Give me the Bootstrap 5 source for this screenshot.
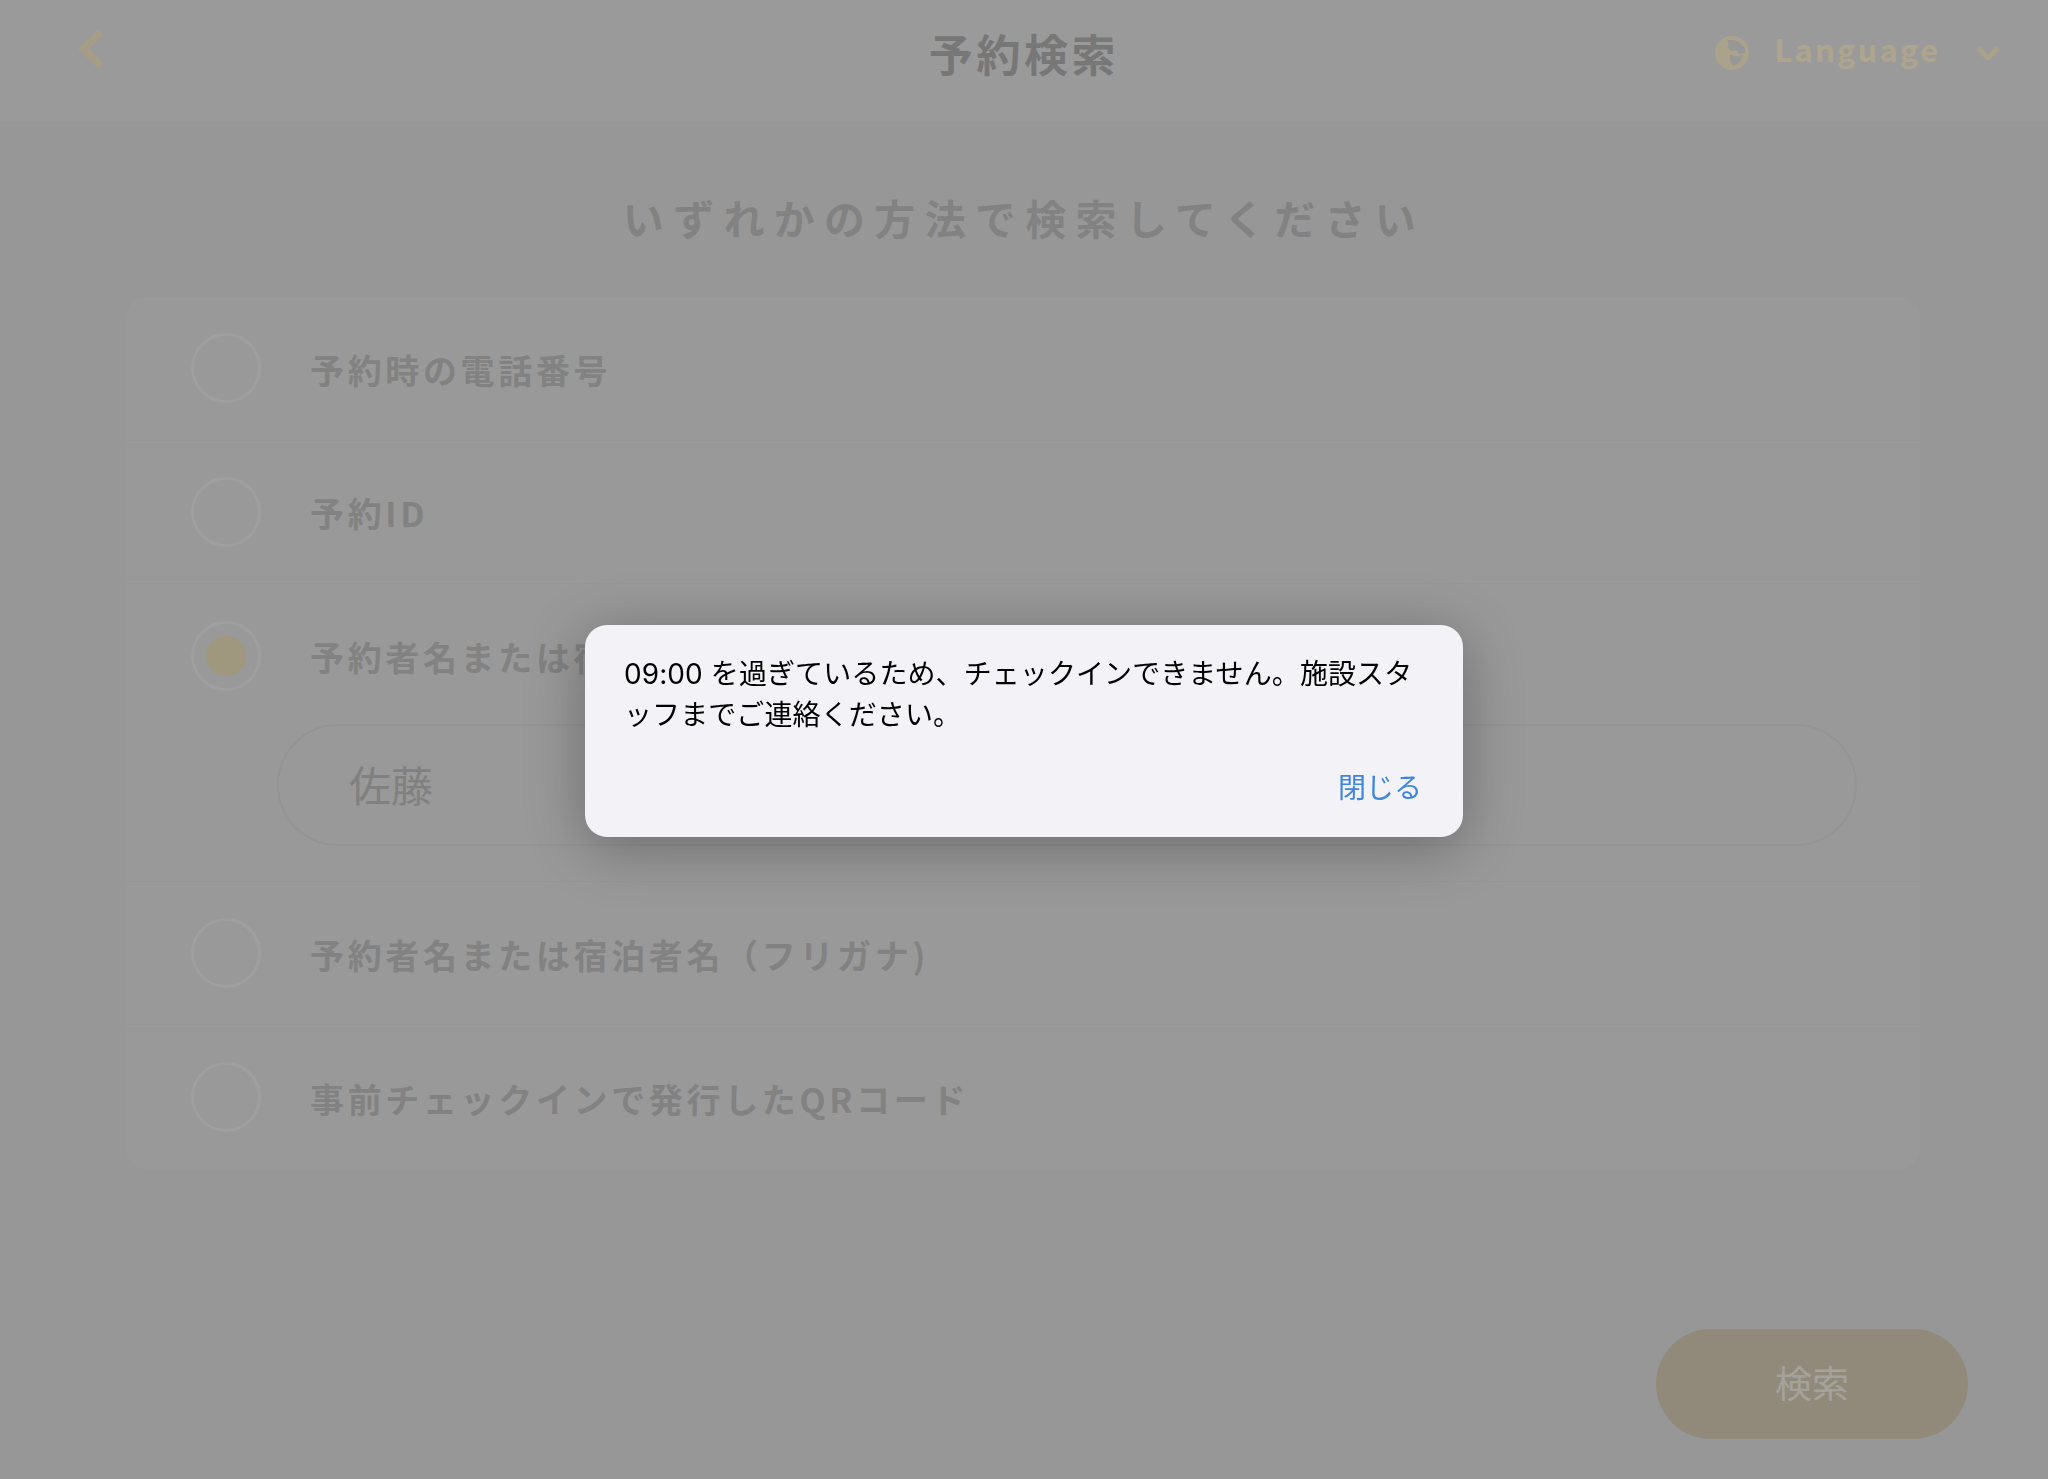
<!DOCTYPE html>
<html lang="ja">
<head>
<meta charset="utf-8">
<title>予約検索</title>
<link href="https://cdn.jsdelivr.net/npm/bootstrap@5.3.0/dist/css/bootstrap.min.css" rel="stylesheet">
<style>
html,body{height:100%}
body{background:#979797;font-family:"Noto Sans CJK JP","Noto Sans",sans-serif;color:#828282;overflow:hidden}
.page-shell{height:1479px}
.top-bar{height:123px;background:#9a9a9a;padding:0 48px 12px;border-bottom:1px solid #969696}
.bar-side{flex:1 1 0}
.top-title{font-size:44px;font-weight:700;letter-spacing:3.6px;color:#777;line-height:1;margin:0 0 5px}
.back-mark{width:26px;height:40px;margin:-12px 0 0 30px}
.lang-group{margin-top:-4px}
.lang-text{font-size:31px;font-weight:700;letter-spacing:2.1px;color:#ada58d;line-height:1;margin:0 36px 9px 26px}
.lang-globe{width:34px;height:34px}
.lang-caret{width:24px;height:14px}
.lead-text{font-size:41px;font-weight:700;letter-spacing:9.3px;color:#828282;text-align:center;line-height:60px;margin:64px 0 50px}
.method-card{margin:0 128px 0 126px;background:#999;border-radius:20px}
.method-row{height:143.6px;padding-left:65px;gap:49px;border-bottom:1px solid #969696}
.method-row:last-child{border-bottom:0}
.method-tall{height:auto;display:block;padding-bottom:35px;border-bottom:1px solid #969696}
.method-head{height:143.6px;gap:49px}
.pick-ring{width:70px;height:70px;border-radius:50%;border:3px solid #9f9f9f;flex:none}
.pick-dot{width:40px;height:40px;border-radius:50%;background:#a0977f}
.method-label{font-size:34px;font-weight:700;letter-spacing:3.65px;color:#828282;line-height:1;margin-top:3px}
.name-field{display:block;margin:-4px 63px 0 86px;width:calc(100% - 149px);height:122px;border-radius:61px;border:2px solid #949494;background:#999;padding:0 70px 2px;font-size:42px;color:#808080;outline:0}
.foot-bar{padding:0 80px 40px 0}
.search-btn{width:312px;height:110px;border-radius:55px;background:#918a7b;border:0;color:#a5a29b;font-size:37px;padding:0 0 3px}
.dim-layer{z-index:1050;padding-bottom:17px;pointer-events:none}
.alert-box{width:878px;height:212px;background:#f2f2f7;border-radius:22px;box-shadow:0 10px 60px rgba(0,0,0,.3);padding:29px 38px 0 39px;font-family:Inter,"Noto Sans CJK JP",sans-serif;color:#000;pointer-events:auto}
.alert-msg{font-size:28px;line-height:41px;margin:0;letter-spacing:.09px}
.alert-act{text-align:right;font-size:28px;line-height:41px;color:#3d85e0;margin-top:32px;padding:0 3px 0 0;background:none;border:0;display:block;width:100%}
</style>
</head>
<body>
<div class="page-shell d-flex flex-column">
  <header class="top-bar d-flex align-items-center">
    <div class="bar-side d-flex align-items-center">
      <svg class="back-mark" viewBox="0 0 26 40"><path d="M23 3 5.500 20 23 37" fill="none" stroke="#a59d88" stroke-width="8"/></svg>
    </div>
    <h1 class="top-title">予約検索</h1>
    <div class="bar-side lang-group d-flex align-items-center justify-content-end">
      <svg class="lang-globe" viewBox="0 0 35 35"><circle cx="17.500" cy="17.500" r="17.500" fill="#aaa28b"/><path d="M13 4.500c6-1.500 13 .5 17.500 8l.5 5-6 1-3-4-5 1-4-4 1-3z" fill="#979797"/><path d="M15 19l7 2 6-1c-.5 5-4 9-9 10.500l-3-4z" fill="#979797"/></svg>
      <span class="lang-text">Language</span>
      <svg class="lang-caret" viewBox="0 0 24 14"><path d="m2 2 10 10L22 2" fill="none" stroke="#aaa28b" stroke-width="5"/></svg>
    </div>
  </header>
  <main class="flex-grow-1">
    <h2 class="lead-text">いずれかの方法で検索してください</h2>
    <div class="method-card">
      <div class="method-row d-flex align-items-center"><span class="pick-ring"></span><span class="method-label">予約時の電話番号</span></div>
      <div class="method-row d-flex align-items-center"><span class="pick-ring"></span><span class="method-label">予約ID</span></div>
      <div class="method-row method-tall">
        <div class="method-head d-flex align-items-center"><span class="pick-ring d-flex align-items-center justify-content-center"><span class="pick-dot"></span></span><span class="method-label">予約者名または宿泊者名</span></div>
        <input class="name-field" type="text" value="佐藤" aria-label="name">
      </div>
      <div class="method-row d-flex align-items-center"><span class="pick-ring"></span><span class="method-label">予約者名または宿泊者名（フリガナ)</span></div>
      <div class="method-row d-flex align-items-center"><span class="pick-ring"></span><span class="method-label">事前チェックインで発行したQRコード</span></div>
    </div>
  </main>
  <footer class="foot-bar d-flex justify-content-end"><button class="search-btn" type="button">検索</button></footer>
</div>
<div class="dim-layer position-fixed top-0 start-0 w-100 h-100 d-flex align-items-center justify-content-center">
  <div class="alert-box" role="alertdialog">
    <p class="alert-msg">09:00 を過ぎているため、チェックインできません。施設スタ<br>ッフまでご連絡ください。</p>
    <button class="alert-act" type="button">閉じる</button>
  </div>
</div>
<script src="https://cdn.jsdelivr.net/npm/bootstrap@5.3.0/dist/js/bootstrap.bundle.min.js"></script>
</body>
</html>
